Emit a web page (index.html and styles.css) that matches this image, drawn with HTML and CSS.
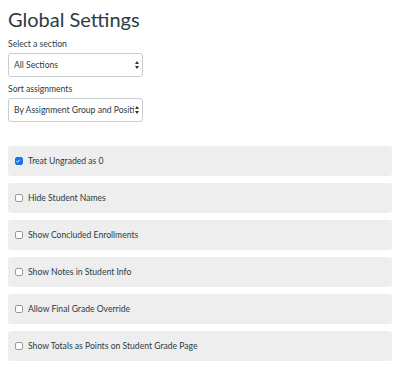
FILE: index.html
```html
<!DOCTYPE html>
<html>
<head>
<meta charset="utf-8">
<link rel="stylesheet" href="styles.css">
</head>
<body>
<div class="page">
  <h1 class="title">Global Settings</h1>
  <label class="field first">
    <span class="label">Select a section</span>
    <span class="select"><span class="select-text">All Sections</span><span class="arrows"></span></span>
  </label>
  <label class="field">
    <span class="label">Sort assignments</span>
    <span class="select"><span class="select-text">By Assignment Group and Positi</span><span class="arrows"></span></span>
  </label>
  <div class="options">
    <div class="card"><span class="box checked"><svg viewBox="0 0 8 8" width="8" height="8"><path d="M1.8 4.2 L3.3 5.6 L6.2 2.4" fill="none" stroke="#fff" stroke-width="1.3"/></svg></span><span>Treat Ungraded as 0</span></div>
    <div class="card"><span class="box"></span><span>Hide Student Names</span></div>
    <div class="card"><span class="box"></span><span>Show Concluded Enrollments</span></div>
    <div class="card"><span class="box"></span><span>Show Notes in Student Info</span></div>
    <div class="card"><span class="box"></span><span>Allow Final Grade Override</span></div>
    <div class="card"><span class="box"></span><span>Show Totals as Points on Student Grade Page</span></div>
  </div>
</div>
</body>
</html>
```
FILE: styles.css
```css
html, body { margin: 0; padding: 0; background: #fff; }
body { font-family: Lato, "Open Sans", sans-serif; color: #2d3b45; }
.page { padding: 6px 8px 0 8px; }
.title { margin: 0; font-size: 20px; font-weight: 400; line-height: 27px; color: #2d3b45; }
.field { display: flex; flex-direction: column; margin-top: 7px; }
.field.first { margin-top: 6px; }
.label { font-size: 8.6px; line-height: 11px; margin-bottom: 3px; color: #2d3b45; }
.select { width: 135px; height: 24px; box-sizing: border-box; border: 1px solid #c7cdd1; border-radius: 3px; display: flex; align-items: center; padding: 0 3px 0 5px; font-size: 8.6px; background: #fff; }
.select-text { flex: 1; white-space: nowrap; overflow: hidden; }
.arrows { width: 4px; height: 8px; position: relative; margin-left: 1px; }
.arrows::before, .arrows::after { content: ""; position: absolute; left: 0; border-left: 2px solid transparent; border-right: 2px solid transparent; }
.arrows::before { top: 0; border-bottom: 3px solid #333; }
.arrows::after { bottom: 0; border-top: 3px solid #333; }
.options { display: flex; flex-direction: column; gap: 7px; margin-top: 24px; }
.card { height: 30px; background: #eeeeee; border-radius: 3px; display: flex; align-items: center; padding: 0 7px; font-size: 8.6px; color: #2d3b45; }
.box { width: 8px; height: 8px; box-sizing: border-box; border: 1px solid #999; border-radius: 2px; background: #fff; margin-right: 5px; display: flex; }
.box.checked { background: #1a73e8; border-color: #1a73e8; }
.box svg { position: relative; left: -1px; top: -1px; }
```
